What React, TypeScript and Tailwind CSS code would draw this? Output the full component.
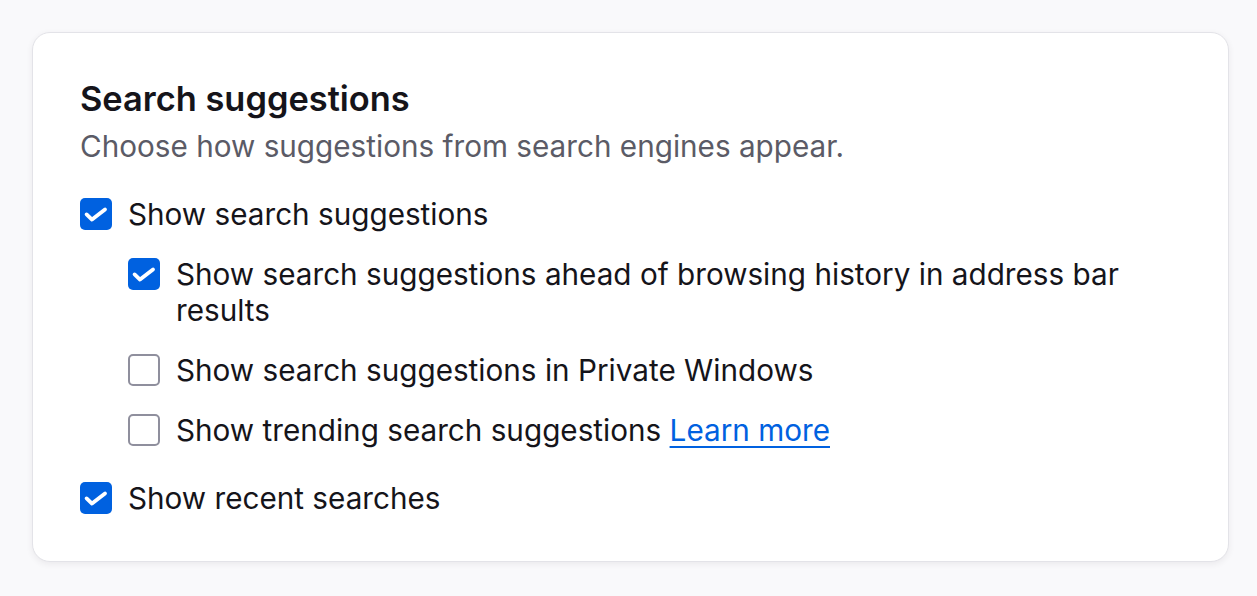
import React from 'react';

// ============================================================================
// Checkbox
// ============================================================================

interface CheckboxProps {
  checked?: boolean;
}

const Checkbox: React.FC<CheckboxProps> = ({ checked }) =>
  checked ? (
    <span className="mt-[2px] block h-8 w-8 shrink-0 rounded-[5px] bg-[#0061e0]">
      <svg width="32" height="32" viewBox="0 0 32 32" fill="none">
        <path d="M6.6 16.4L12 21.6L25 11.4" stroke="#fff" strokeWidth="3.8" strokeLinecap="round" strokeLinejoin="round" />
      </svg>
    </span>
  ) : (
    <span className="mt-[2px] block h-8 w-8 shrink-0 rounded-[5px] border-2 border-[#8f8f9d] bg-white" />
  );

// ============================================================================
// Row
// ============================================================================

const Row: React.FC<{ checked?: boolean; children: React.ReactNode; className?: string }> = ({
  checked, children, className,
}) => (
  <label className={`flex items-start gap-4 ${className ?? ''}`}>
    <Checkbox checked={checked} />
    <span className="leading-[36px]">{children}</span>
  </label>
);

export default function App() {
  return (
    <div
      className="min-h-[596px] bg-[#f9f9fb] pl-8 pt-8 text-[#15141a]"
      style={{ fontFamily: 'Inter, "Noto Sans", sans-serif' }}
    >
      <section className="h-[530px] w-[1197px] rounded-[18px] border border-[#e3e3e8] bg-white px-[47px] pt-[46px] shadow-[0_2px_6px_rgba(58,57,68,0.08)]">
        <h2 className="text-[34.4px] font-semibold leading-[40px]">Search suggestions</h2>
        <p className="mt-[9px] text-[29.7px] leading-[36px] text-[#5b5b66]">
          Choose how suggestions from search engines appear.
        </p>

        <div className="mt-8 flex flex-col text-[29.7px]">
          <Row checked>Show search suggestions</Row>

          <div className="ml-12 mt-6 flex flex-col gap-6">
            <Row checked>
              Show search suggestions ahead of browsing history in address bar
              <br />
              results
            </Row>
            <Row>Show search suggestions in Private Windows</Row>
            <Row>
              Show trending search suggestions{' '}
              <a href="#" className="text-[#0061e0] underline underline-offset-[5px] decoration-[2px]">
                Learn more
              </a>
            </Row>
          </div>

          <Row checked className="mt-8">Show recent searches</Row>
        </div>
      </section>
    </div>
  );
}
